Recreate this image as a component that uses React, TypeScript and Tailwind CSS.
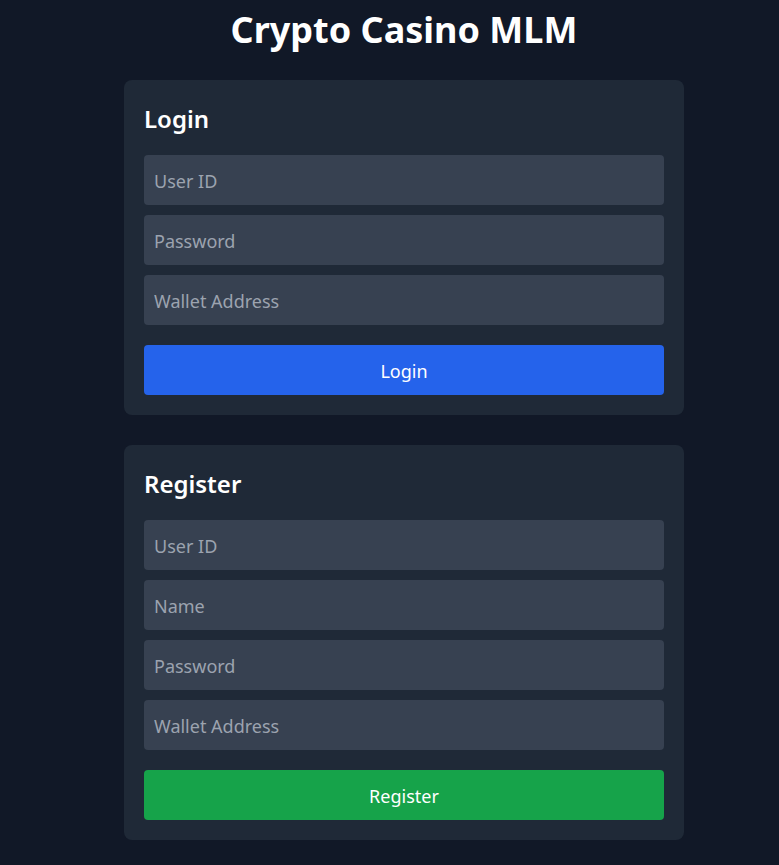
export default function App() {
  return (
    <div
      className="min-h-screen bg-[#111827] pb-6 pl-[29px] text-white"
      style={{ fontFamily: '"Noto Sans", "Open Sans", sans-serif' }}
    >
      <h1 className="pt-[6px] text-center text-[36px] font-bold leading-[48px]">
        Crypto Casino MLM
      </h1>

      <div className="mx-auto mt-[26px] flex w-[560px] flex-col gap-[30px]">
        <div className="rounded-lg bg-[#1f2937] p-5">
          <h2 className="mb-5 mt-[3px] text-2xl font-semibold leading-8">Login</h2>
          <div className="flex flex-col gap-[10px]">
            <input
              className="h-[50px] w-full rounded bg-[#374151] px-[10px] pt-[2px] text-lg text-white placeholder-[#9ca3af] outline-none"
              placeholder="User ID"
            />
            <input
              type="password"
              className="h-[50px] w-full rounded bg-[#374151] px-[10px] pt-[2px] text-lg text-white placeholder-[#9ca3af] outline-none"
              placeholder="Password"
            />
            <input
              className="h-[50px] w-full rounded bg-[#374151] px-[10px] pt-[2px] text-lg text-white placeholder-[#9ca3af] outline-none"
              placeholder="Wallet Address"
            />
          </div>
          <button className="mt-5 h-[50px] w-full rounded bg-[#2563eb] pt-[2px] text-lg text-white">
            Login
          </button>
        </div>

        <div className="rounded-lg bg-[#1f2937] p-5">
          <h2 className="mb-5 mt-[3px] text-2xl font-semibold leading-8">Register</h2>
          <div className="flex flex-col gap-[10px]">
            <input
              className="h-[50px] w-full rounded bg-[#374151] px-[10px] pt-[2px] text-lg text-white placeholder-[#9ca3af] outline-none"
              placeholder="User ID"
            />
            <input
              className="h-[50px] w-full rounded bg-[#374151] px-[10px] pt-[2px] text-lg text-white placeholder-[#9ca3af] outline-none"
              placeholder="Name"
            />
            <input
              type="password"
              className="h-[50px] w-full rounded bg-[#374151] px-[10px] pt-[2px] text-lg text-white placeholder-[#9ca3af] outline-none"
              placeholder="Password"
            />
            <input
              className="h-[50px] w-full rounded bg-[#374151] px-[10px] pt-[2px] text-lg text-white placeholder-[#9ca3af] outline-none"
              placeholder="Wallet Address"
            />
          </div>
          <button className="mt-5 h-[50px] w-full rounded bg-[#16a34a] pt-[2px] text-lg text-white">
            Register
          </button>
        </div>
      </div>
    </div>
  );
}
